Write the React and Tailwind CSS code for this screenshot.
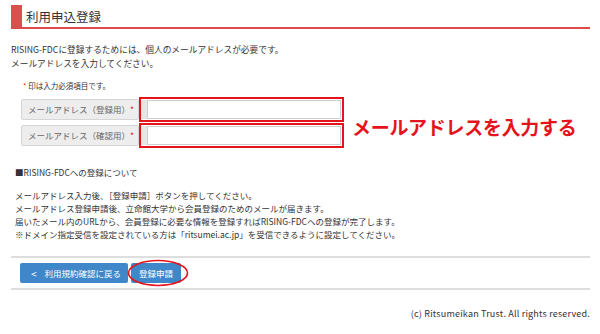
// App.jsx
import React from 'react';

const FONT = { fontFamily: '"Noto Sans CJK JP", "Noto Sans", sans-serif' };

const FieldRow = ({ label }) => (
  <div className="flex items-center h-[25px]">
    <div className="ml-[10px] w-[118px] h-[21px] flex items-center justify-between bg-[#ededed] border border-[#d6d6d6] rounded-[2px] pl-[6px] pr-[4px] text-[8.5px] text-[#666]">
      <span>{label}</span>
      <span className="text-[#e0242b]">*</span>
    </div>
    <div className="w-[205px] h-[25px] border-2 border-[#e5141c] flex">
      <div className="w-[6px] bg-[#e6e6e6] my-[1px]" />
      <div className="flex-1 bg-white border border-[#cfcfcf] my-[1px] mr-[1px]" />
    </div>
  </div>
);

const App = () => {
  return (
    <div className="w-[600px] h-[334px] bg-white overflow-hidden pl-[11px] pr-[10px] text-[#333]" style={FONT}>
      {/* header */}
      <div className="mt-[5px] h-[24px] flex border-b-2 border-[#dc4b4b]">
        <div className="w-[11px] bg-[#d9504f]" />
        <div className="ml-[4px] self-center text-[12.5px] leading-[16px] pt-[2px] text-[#333]">利用申込登録</div>
      </div>

      <div className="mt-[14px] text-[8.7px] leading-[14px]">
        <p>RISING-FDCに登録するためには、個人のメールアドレスが必要です。</p>
        <p>メールアドレスを入力してください。</p>
      </div>

      <p className="mt-[9px] pl-[12px] text-[7.5px] leading-[12px]">
        <span className="text-[#e0242b]">*</span> 印は入力必須項目です。
      </p>

      <div className="mt-[5px] flex items-center">
        <div className="flex flex-col gap-[1px]">
          <FieldRow label="メールアドレス（登録用）" />
          <FieldRow label="メールアドレス（確認用）" />
        </div>
        <div className="ml-[8px] pt-[8px] text-[19px] leading-[24px] font-bold text-[#e5141c] tracking-[-0.3px]">
          メールアドレスを入力する
        </div>
      </div>

      <p className="mt-[18px] pl-[4px] text-[8.5px] leading-[12px]">■RISING-FDCへの登録について</p>

      <div className="mt-[11px] pl-[4px] text-[8.5px] leading-[13px]">
        <p>メールアドレス入力後、［登録申請］ボタンを押してください。</p>
        <p>メールアドレス登録申請後、立命館大学から会員登録のためのメールが届きます。</p>
        <p>届いたメール内のURLから、会員登録に必要な情報を登録すればRISING-FDCへの登録が完了します。</p>
        <p>※ドメイン指定受信を設定されている方は「ritsumei.ac.jp」を受信できるように設定してください。</p>
      </div>

      {/* buttons */}
      <div className="mt-[15px] border-t-2 border-b-2 border-[#dedede] pt-[5px] pb-[5px] flex items-center gap-[3px]">
        <button className="ml-[9px] w-[108px] h-[20px] bg-[#3f87c9] rounded-[2px] text-white text-[8.5px] flex items-center pl-[11px]">
          <span className="mr-[8px] text-[10px]">&lt;</span>
          利用規約確認に戻る
        </button>
        <div className="relative">
          <button className="w-[50px] h-[20px] bg-[#3f87c9] rounded-[2px] text-white text-[8.5px] flex items-center justify-center">
            登録申請
          </button>
          <svg className="absolute -left-[4px] -top-[4px]" width="62" height="28" viewBox="0 0 62 28">
            <ellipse cx="31" cy="14" rx="29.5" ry="12.5" fill="none" stroke="#e5141c" strokeWidth="1.6" />
          </svg>
        </div>
      </div>

      <p className="mt-[18px] text-right text-[9px] leading-[12px] tracking-[0.2px] text-[#333]">
        (c) Ritsumeikan Trust. All rights reserved.
      </p>
    </div>
  );
};

export default App;
